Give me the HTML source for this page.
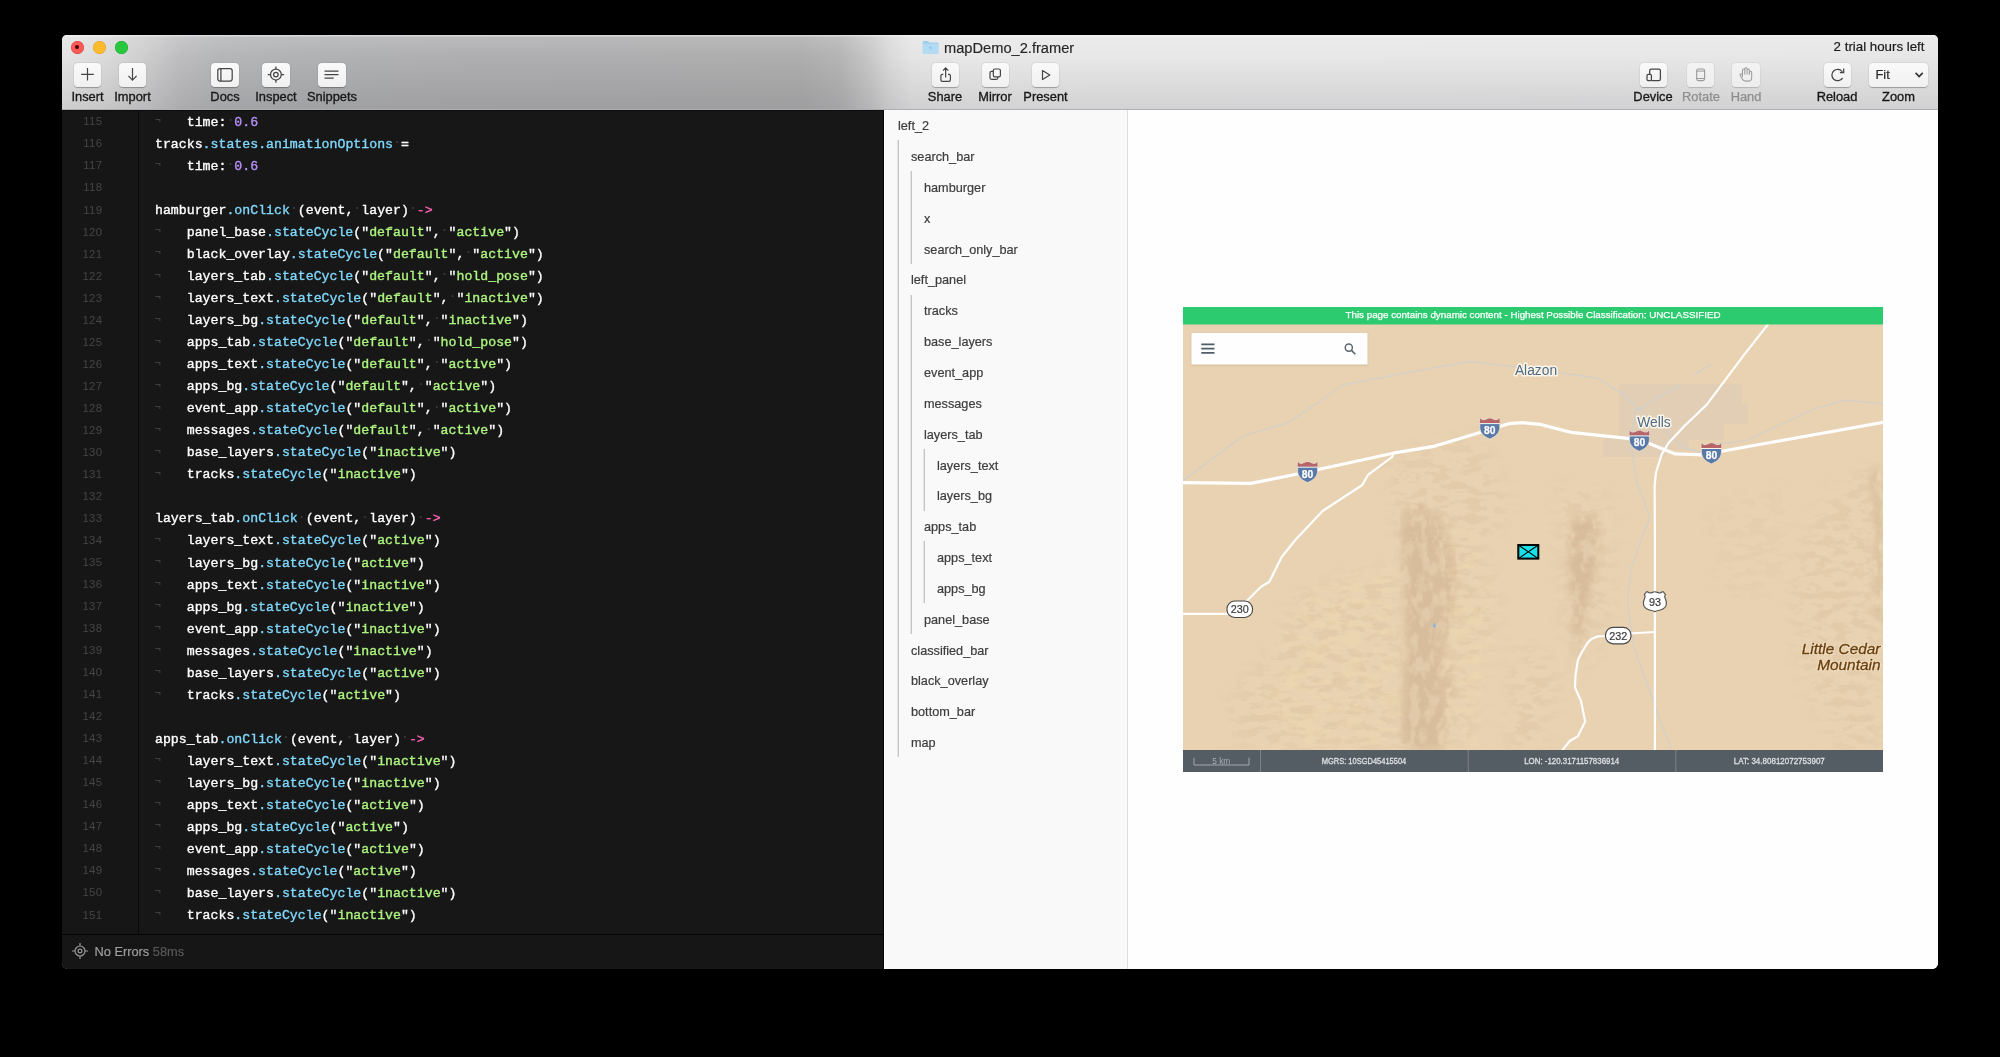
<!DOCTYPE html>
<html><head><meta charset="utf-8"><title>mapDemo_2.framer</title>
<style>
*{box-sizing:border-box;margin:0;padding:0}
html,body{width:2000px;height:1057px;background:#000;overflow:hidden}
body{font-family:"Liberation Sans",sans-serif;position:relative}
#win{position:absolute;left:62px;top:35px;width:1876px;height:934px;border-radius:5px 5px 6px 6px;overflow:hidden;background:#fff;will-change:transform;opacity:.999}
#tb{position:absolute;left:0;top:0;width:1876px;height:75px;
 background:
  linear-gradient(to bottom,rgba(255,255,255,.16) 0,rgba(255,255,255,0) 28%,rgba(0,0,8,.095) 100%),
  linear-gradient(to right,#e5e5e5 0px,#dddddd 40px,#d0d0d1 80px,#bebec0 120px,#b6b7b9 160px,#b2b3b5 240px,#b0b0b2 400px,#afafb0 740px,#b6b6b7 778px,#c9c9ca 808px,#dbdbdc 828px,#e6e6e7 850px,#e9e9ea 900px,#e8e8e9 1876px);
 border-bottom:1px solid #b0b0b2}
#tb:before{content:"";position:absolute;left:0;top:0;right:0;height:2px;background:linear-gradient(rgba(255,255,255,.5),rgba(255,255,255,.12))}
.tl{position:absolute;top:5.5px;width:13px;height:13px;border-radius:50%}
.btn{position:absolute;top:28px;height:24px;width:28px;border-radius:4px;background:linear-gradient(#fbfbfb,#f1f1f1);box-shadow:0 0.5px 1px rgba(0,0,0,.28),0 0 0 .5px rgba(0,0,0,.05)}
.btn svg{position:absolute;left:0;top:0;width:28px;height:24px}
.btn.dis{background:linear-gradient(#f4f4f4,#eeeeee);box-shadow:0 0.5px 1px rgba(0,0,0,.16),0 0 0 .5px rgba(0,0,0,.04)}
.lb{position:absolute;top:54px;width:80px;margin-left:-40px;text-align:center;font-size:12.85px;color:#1a1a1a;line-height:16px;white-space:nowrap;-webkit-text-stroke:.32px #161616}
.lb.dis{color:#8e8e8e;-webkit-text-stroke:.25px #8e8e8e}
#title{position:absolute;left:882px;top:3.6px;font-size:14.65px;line-height:18px;color:#262626;white-space:nowrap;-webkit-text-stroke:.15px #262626}
#trial{position:absolute;right:13.5px;top:2.8px;font-size:13.3px;line-height:17px;color:#1c1c1c;white-space:nowrap;-webkit-text-stroke:.2px #1c1c1c}
#ed{position:absolute;left:0;top:75px;width:822px;height:859px;background:#181818;border-right:1px solid #050505}
#ed:after{content:"";position:absolute;left:0;top:0;width:821px;height:1px;background:#0d0d0d}
#gut{position:absolute;left:0;top:0;width:77px;height:824px;border-right:1px solid #090909;background:#171717}
.ln{height:22.04px;line-height:22.04px;text-align:right;padding-right:36.5px;font-size:11.4px;letter-spacing:.35px;color:#464646;font-family:"Liberation Sans",sans-serif}
#lns{position:absolute;left:0;top:.4px;width:77px}
#code{position:absolute;left:93px;top:1.9px;font-family:"Liberation Mono",monospace;font-size:13.22px;color:#fff;white-space:pre;-webkit-text-stroke:.35px #fff}
.cl{height:22.04px;line-height:22.04px}
.p{color:#80d9fd;-webkit-text-stroke:.35px #80d9fd}
.s{color:#aef580;-webkit-text-stroke:.35px #aef580}
.n{color:#b892fb;-webkit-text-stroke:.35px #b892fb}
.a{color:#ff63b5;-webkit-text-stroke:.35px #ff63b5}
.d{color:#404040;-webkit-text-stroke:0;position:relative;top:-1.8px}
.nl{color:#4c4c4c;-webkit-text-stroke:.2px #4c4c4c;font-size:9.5px;position:relative;top:-2.6px;display:inline-block;width:7.93px;line-height:10px}
#st{position:absolute;left:0;top:824px;width:821px;height:35px;border-top:1px solid #060606;background:#171717}
#st .t{position:absolute;left:32.5px;top:9px;font-size:12.8px;-webkit-text-stroke:.15px #a2a2a2;line-height:16px;color:#a2a2a2;white-space:nowrap}
#st .t i{font-style:normal;color:#5a5a5a;-webkit-text-stroke:.15px #5a5a5a}
#lay{position:absolute;left:823px;top:75px;width:243px;height:859px;background:#fafafa;border-right:1px solid #dedede}
.ly{position:absolute;font-size:12.7px;line-height:20px;color:#3e3e3e;white-space:nowrap;margin-top:1.2px;-webkit-text-stroke:.2px #3e3e3e}
.gd{position:absolute;width:1px;background:#c6c6c6;box-shadow:-1px 0 0 rgba(198,198,198,.4)}
#pv{position:absolute;left:1066px;top:75px;width:810px;height:859px;background:#fff}
#map{position:absolute;left:1121px;top:272px;width:700px;height:465px;will-change:transform;opacity:.999}
</style></head><body>
<div id="win">
 <div id="tb">
  <div class="tl" style="left:8.5px;background:#fc5b57;box-shadow:inset 0 0 0 .5px #df4744"><div style="position:absolute;left:4.5px;top:4.5px;width:4px;height:4px;border-radius:50%;background:#4c0102"></div></div>
  <div class="tl" style="left:30.5px;background:#fdbc2e;box-shadow:inset 0 0 0 .5px #dea034"></div>
  <div class="tl" style="left:52.5px;background:#28c83f;box-shadow:inset 0 0 0 .5px #1eab2c"></div>

  <div class="btn" style="left:12px;width:27px"><svg viewBox="0 0 28 24"><path d="M13.500 5v12.600M7.200 11.300h12.600" stroke="#464646" stroke-width="1.2" fill="none"/></svg></div>
  <div class="lb" style="left:25.5px">Insert</div>
  <div class="btn" style="left:57px;width:27px"><svg viewBox="0 0 28 24"><path d="M13.500 5v12M9.400 12.800l4.100 4.400l4.100-4.400" stroke="#464646" stroke-width="1.2" fill="none"/></svg></div>
  <div class="lb" style="left:70.5px">Import</div>
  <div class="btn" style="left:149px"><svg viewBox="0 0 28 24"><rect x="6.800" y="5.600" width="14.400" height="12.400" rx="2.200" stroke="#464646" stroke-width="1.25" fill="none"/><path d="M9.900 5.600v12.400" stroke="#464646" stroke-width="1.25"/></svg></div>
  <div class="lb" style="left:163px">Docs</div>
  <div class="btn" style="left:200px"><svg viewBox="0 0 28 24"><circle cx="13.900" cy="11.600" r="5.400" stroke="#464646" stroke-width="1.25" fill="none"/><circle cx="13.900" cy="11.600" r="2.300" stroke="#464646" stroke-width="1.25" fill="none"/><path d="M13.900 3.400v2.800M13.900 17v2.800M5.700 11.600h2.800M19.300 11.600h2.800" stroke="#464646" stroke-width="1.25"/></svg></div>
  <div class="lb" style="left:214px">Inspect</div>
  <div class="btn" style="left:256px"><svg viewBox="0 0 28 24"><path d="M6.500 8.200h14M6.500 11.700h14M6.500 15.200h9.200" stroke="#464646" stroke-width="1.25"/></svg></div>
  <div class="lb" style="left:270px">Snippets</div>

  <svg style="position:absolute;left:860px;top:5px" width="18" height="15" viewBox="0 0 18 15"><path d="M.8 1.800a.8 .8 0 0 1 .8-.8h4.400l1.300 1.400h8.300a.8 .8 0 0 1 .8 .8v10.200a.6 .6 0 0 1-.6 .6H1.400a.6 .6 0 0 1-.6-.6z" fill="#9fd0f0"/><path d="M.8 3.800h15.600v9.600a.6 .6 0 0 1-.6 .6H1.400a.6 .6 0 0 1-.6-.6z" fill="#b4dcf5"/><path d="M7.300 6.500h2.800l-1.400 1.500h1.400l-1.900 2v-1.700h-.9z" fill="#8ec6ec"/></svg>
  <div id="title">mapDemo_2.framer</div>

  <div class="btn" style="left:870px;width:27px"><svg viewBox="0 0 28 24"><path d="M11.300 11.300H10.300a1.400 1.400 0 0 0-1.400 1.400V17a1.400 1.400 0 0 0 1.400 1.400H17a1.400 1.400 0 0 0 1.400-1.400V12.700a1.400 1.400 0 0 0-1.400-1.400H16M13.650 14.400V5M11 7.600L13.650 4.900L16.300 7.600" stroke="#464646" stroke-width="1.2" fill="none"/></svg></div>
  <div class="lb" style="left:883px">Share</div>
  <div class="btn" style="left:920px;width:27px"><svg viewBox="0 0 28 24"><rect x="11.300" y="6" width="7.100" height="7.800" rx="1.600" stroke="#464646" stroke-width="1.2" fill="none"/><path d="M11.300 8.400H9.600a1.600 1.600 0 0 0-1.600 1.600V14.700a1.600 1.600 0 0 0 1.600 1.600H14.300a1.600 1.600 0 0 0 1.600-1.600V13.800" stroke="#464646" stroke-width="1.2" fill="none"/></svg></div>
  <div class="lb" style="left:933px">Mirror</div>
  <div class="btn" style="left:970px;width:27px"><svg viewBox="0 0 28 24"><path d="M10.500 7.500L17.800 12L10.500 16.500z" stroke="#464646" stroke-width="1.2" fill="none" stroke-linejoin="round"/></svg></div>
  <div class="lb" style="left:983.5px">Present</div>

  <div id="trial">2 trial hours left</div>
  <div class="btn" style="left:1578px;width:27px"><svg viewBox="0 0 28 24"><path d="M11.400 17.600H18.800a1.600 1.600 0 0 0 1.600-1.600V7.600a1.600 1.600 0 0 0-1.600-1.600H11.300a1.600 1.600 0 0 0-1.600 1.600V11.300" stroke="#464646" stroke-width="1.25" fill="none"/><rect x="7" y="11.300" width="4.400" height="6.300" rx="1.200" stroke="#464646" stroke-width="1.25" fill="none"/></svg></div>
  <div class="lb" style="left:1591px">Device</div>
  <div class="btn dis" style="left:1625px;width:27px"><svg viewBox="0 0 28 24"><rect x="9.700" y="6" width="7.900" height="11.600" rx="1.800" stroke="#9c9c9c" stroke-width="1.15" fill="none"/><path d="M9.700 8.100h7.900M9.700 15.500h7.900" stroke="#9c9c9c" stroke-width="1"/></svg></div>
  <div class="lb dis" style="left:1639px">Rotate</div>
  <div class="btn dis" style="left:1670px"><svg viewBox="0 0 28 24"><path d="M10.500 13.600V7.200a1.150 1.150 0 0 1 2.300 0V5.800a1.150 1.150 0 0 1 2.300 0V7.200a1.150 1.150 0 0 1 2.300 0V9.400a1.150 1.150 0 0 1 2.300 0V14.400c0 2.200-1.600 3.700-3.800 3.700h-2c-2 0-3.100-1-3.800-2.400l-1.900-3.300a1.100 1.100 0 0 1 1.900-1.100zM12.800 7.200V11.500M15.100 7.200V11.500M17.400 9.400V11.700" stroke="#9c9c9c" stroke-width="1.05" fill="none" stroke-linejoin="round"/></svg></div>
  <div class="lb dis" style="left:1684px">Hand</div>
  <div class="btn" style="left:1762px;width:27px"><svg viewBox="0 0 28 24"><path d="M18.540 14.850A5.700 5.700 0 1 1 18.430 8.980" stroke="#464646" stroke-width="1.25" fill="none"/><path d="M19.700 5.400V9.500H15.900" stroke="#464646" stroke-width="1.25" fill="none"/></svg></div>
  <div class="lb" style="left:1775px">Reload</div>
  <div class="btn" style="left:1807px;width:59px"><div style="position:absolute;left:6.500px;top:4px;font-size:12.85px;line-height:16px;color:#2a2a2a;-webkit-text-stroke:.2px #2a2a2a">Fit</div><svg viewBox="0 0 59 24" style="width:59px"><path d="M46.600 9.900l3.550 3.600l3.550-3.600" stroke="#333" stroke-width="1.6" fill="none"/></svg></div>
  <div class="lb" style="left:1836.5px">Zoom</div>
 </div>

 <div id="ed">
  <div id="gut"></div>
  <div id="lns">
<div class="ln">115</div>
<div class="ln">116</div>
<div class="ln">117</div>
<div class="ln">118</div>
<div class="ln">119</div>
<div class="ln">120</div>
<div class="ln">121</div>
<div class="ln">122</div>
<div class="ln">123</div>
<div class="ln">124</div>
<div class="ln">125</div>
<div class="ln">126</div>
<div class="ln">127</div>
<div class="ln">128</div>
<div class="ln">129</div>
<div class="ln">130</div>
<div class="ln">131</div>
<div class="ln">132</div>
<div class="ln">133</div>
<div class="ln">134</div>
<div class="ln">135</div>
<div class="ln">136</div>
<div class="ln">137</div>
<div class="ln">138</div>
<div class="ln">139</div>
<div class="ln">140</div>
<div class="ln">141</div>
<div class="ln">142</div>
<div class="ln">143</div>
<div class="ln">144</div>
<div class="ln">145</div>
<div class="ln">146</div>
<div class="ln">147</div>
<div class="ln">148</div>
<div class="ln">149</div>
<div class="ln">150</div>
<div class="ln">151</div>
  </div>
  <div id="code"><div class="cl"><span class="nl">¬</span>   time:<span class="d">·</span><span class="n">0.6</span></div><div class="cl">tracks<span class="p">.states</span><span class="p">.animationOptions</span><span class="d">·</span>=</div><div class="cl"><span class="nl">¬</span>   time:<span class="d">·</span><span class="n">0.6</span></div><div class="cl"></div><div class="cl">hamburger<span class="p">.onClick</span><span class="d">·</span>(event,<span class="d">·</span>layer)<span class="d">·</span><span class="a">-&gt;</span></div><div class="cl"><span class="nl">¬</span>   panel_base<span class="p">.stateCycle</span>("<span class="s">default</span>",<span class="d">·</span>"<span class="s">active</span>")</div><div class="cl"><span class="nl">¬</span>   black_overlay<span class="p">.stateCycle</span>("<span class="s">default</span>",<span class="d">·</span>"<span class="s">active</span>")</div><div class="cl"><span class="nl">¬</span>   layers_tab<span class="p">.stateCycle</span>("<span class="s">default</span>",<span class="d">·</span>"<span class="s">hold_pose</span>")</div><div class="cl"><span class="nl">¬</span>   layers_text<span class="p">.stateCycle</span>("<span class="s">default</span>",<span class="d">·</span>"<span class="s">inactive</span>")</div><div class="cl"><span class="nl">¬</span>   layers_bg<span class="p">.stateCycle</span>("<span class="s">default</span>",<span class="d">·</span>"<span class="s">inactive</span>")</div><div class="cl"><span class="nl">¬</span>   apps_tab<span class="p">.stateCycle</span>("<span class="s">default</span>",<span class="d">·</span>"<span class="s">hold_pose</span>")</div><div class="cl"><span class="nl">¬</span>   apps_text<span class="p">.stateCycle</span>("<span class="s">default</span>",<span class="d">·</span>"<span class="s">active</span>")</div><div class="cl"><span class="nl">¬</span>   apps_bg<span class="p">.stateCycle</span>("<span class="s">default</span>",<span class="d">·</span>"<span class="s">active</span>")</div><div class="cl"><span class="nl">¬</span>   event_app<span class="p">.stateCycle</span>("<span class="s">default</span>",<span class="d">·</span>"<span class="s">active</span>")</div><div class="cl"><span class="nl">¬</span>   messages<span class="p">.stateCycle</span>("<span class="s">default</span>",<span class="d">·</span>"<span class="s">active</span>")</div><div class="cl"><span class="nl">¬</span>   base_layers<span class="p">.stateCycle</span>("<span class="s">inactive</span>")</div><div class="cl"><span class="nl">¬</span>   tracks<span class="p">.stateCycle</span>("<span class="s">inactive</span>")</div><div class="cl"></div><div class="cl">layers_tab<span class="p">.onClick</span><span class="d">·</span>(event,<span class="d">·</span>layer)<span class="d">·</span><span class="a">-&gt;</span></div><div class="cl"><span class="nl">¬</span>   layers_text<span class="p">.stateCycle</span>("<span class="s">active</span>")</div><div class="cl"><span class="nl">¬</span>   layers_bg<span class="p">.stateCycle</span>("<span class="s">active</span>")</div><div class="cl"><span class="nl">¬</span>   apps_text<span class="p">.stateCycle</span>("<span class="s">inactive</span>")</div><div class="cl"><span class="nl">¬</span>   apps_bg<span class="p">.stateCycle</span>("<span class="s">inactive</span>")</div><div class="cl"><span class="nl">¬</span>   event_app<span class="p">.stateCycle</span>("<span class="s">inactive</span>")</div><div class="cl"><span class="nl">¬</span>   messages<span class="p">.stateCycle</span>("<span class="s">inactive</span>")</div><div class="cl"><span class="nl">¬</span>   base_layers<span class="p">.stateCycle</span>("<span class="s">active</span>")</div><div class="cl"><span class="nl">¬</span>   tracks<span class="p">.stateCycle</span>("<span class="s">active</span>")</div><div class="cl"></div><div class="cl">apps_tab<span class="p">.onClick</span><span class="d">·</span>(event,<span class="d">·</span>layer)<span class="d">·</span><span class="a">-&gt;</span></div><div class="cl"><span class="nl">¬</span>   layers_text<span class="p">.stateCycle</span>("<span class="s">inactive</span>")</div><div class="cl"><span class="nl">¬</span>   layers_bg<span class="p">.stateCycle</span>("<span class="s">inactive</span>")</div><div class="cl"><span class="nl">¬</span>   apps_text<span class="p">.stateCycle</span>("<span class="s">active</span>")</div><div class="cl"><span class="nl">¬</span>   apps_bg<span class="p">.stateCycle</span>("<span class="s">active</span>")</div><div class="cl"><span class="nl">¬</span>   event_app<span class="p">.stateCycle</span>("<span class="s">active</span>")</div><div class="cl"><span class="nl">¬</span>   messages<span class="p">.stateCycle</span>("<span class="s">active</span>")</div><div class="cl"><span class="nl">¬</span>   base_layers<span class="p">.stateCycle</span>("<span class="s">inactive</span>")</div><div class="cl"><span class="nl">¬</span>   tracks<span class="p">.stateCycle</span>("<span class="s">inactive</span>")</div></div>
  <div id="st">
   <svg style="position:absolute;left:8.7px;top:7px" width="18" height="18" viewBox="0 0 18 18"><circle cx="9" cy="9" r="5" stroke="#9a9a9a" stroke-width="1.2" fill="none"/><circle cx="9" cy="9" r="1.900" stroke="#9a9a9a" stroke-width="1.2" fill="none"/><path d="M9 1v3M9 14v3M1 9h3M14 9h3" stroke="#9a9a9a" stroke-width="1.2"/></svg>
   <div class="t">No Errors <i>58ms</i></div>
  </div>
 </div>

 <div id="lay">
<div class="ly" style="left:13px;top:5.00px">left_2</div>
<div class="ly" style="left:26px;top:35.85px">search_bar</div>
<div class="ly" style="left:39px;top:66.70px">hamburger</div>
<div class="ly" style="left:39px;top:97.55px">x</div>
<div class="ly" style="left:39px;top:128.40px">search_only_bar</div>
<div class="ly" style="left:26px;top:159.25px">left_panel</div>
<div class="ly" style="left:39px;top:190.10px">tracks</div>
<div class="ly" style="left:39px;top:220.95px">base_layers</div>
<div class="ly" style="left:39px;top:251.80px">event_app</div>
<div class="ly" style="left:39px;top:282.65px">messages</div>
<div class="ly" style="left:39px;top:313.50px">layers_tab</div>
<div class="ly" style="left:52px;top:344.35px">layers_text</div>
<div class="ly" style="left:52px;top:375.20px">layers_bg</div>
<div class="ly" style="left:39px;top:406.05px">apps_tab</div>
<div class="ly" style="left:52px;top:436.90px">apps_text</div>
<div class="ly" style="left:52px;top:467.75px">apps_bg</div>
<div class="ly" style="left:39px;top:498.60px">panel_base</div>
<div class="ly" style="left:26px;top:529.45px">classified_bar</div>
<div class="ly" style="left:26px;top:560.30px">black_overlay</div>
<div class="ly" style="left:26px;top:591.15px">bottom_bar</div>
<div class="ly" style="left:26px;top:622.00px">map</div>
<div class="gd" style="left:13px;top:30.42px;height:617.00px"></div>
<div class="gd" style="left:26px;top:61.27px;height:92.55px"></div>
<div class="gd" style="left:26px;top:184.68px;height:339.35px"></div>
<div class="gd" style="left:39px;top:338.93px;height:61.70px"></div>
<div class="gd" style="left:39px;top:431.48px;height:61.70px"></div>
 </div>

 <div id="pv"></div>
 <div id="map">
<svg width="700" height="465" viewBox="0 0 700 465" style="display:block;font-family:'Liberation Sans',sans-serif">
<defs>
 <filter id="b4" x="-20%" y="-20%" width="140%" height="140%"><feGaussianBlur stdDeviation="4"/></filter>
 <filter id="b8" x="-20%" y="-20%" width="140%" height="140%"><feGaussianBlur stdDeviation="9"/></filter>
 <filter id="b1" x="-5%" y="-20%" width="110%" height="140%"><feGaussianBlur stdDeviation=".8"/></filter>
 <filter id="b2" x="-20%" y="-20%" width="140%" height="140%"><feGaussianBlur stdDeviation="2"/></filter>
 
 <filter id="tD" x="0" y="0" width="700" height="465" filterUnits="userSpaceOnUse" color-interpolation-filters="sRGB">
  <feGaussianBlur in="SourceAlpha" stdDeviation="3.5" result="m"/>
  <feTurbulence type="fractalNoise" baseFrequency="0.11 0.06" numOctaves="3" seed="11" result="n"/>
  <feColorMatrix in="n" type="matrix" values="0 0 0 0 .80  0 0 0 0 .68  0 0 0 0 .55  5 0 0 0 -1.7" result="p"/>
  <feComposite in="p" in2="m" operator="in"/>
 </filter>
 <filter id="tM" x="0" y="0" width="700" height="465" filterUnits="userSpaceOnUse" color-interpolation-filters="sRGB">
  <feGaussianBlur in="SourceAlpha" stdDeviation="10" result="m"/>
  <feTurbulence type="fractalNoise" baseFrequency="0.06 0.13" numOctaves="3" seed="4" result="n"/>
  <feColorMatrix in="n" type="matrix" values="0 0 0 0 .82  0 0 0 0 .70  0 0 0 0 .57  0 9 0 0 -4.3" result="p"/>
  <feComposite in="p" in2="m" operator="in"/>
 </filter>
 <filter id="tL" x="0" y="0" width="700" height="465" filterUnits="userSpaceOnUse" color-interpolation-filters="sRGB">
  <feGaussianBlur in="SourceAlpha" stdDeviation="8" result="m"/>
  <feTurbulence type="fractalNoise" baseFrequency="0.05 0.14" numOctaves="3" seed="23" result="n"/>
  <feColorMatrix in="n" type="matrix" values="0 0 0 0 .96  0 0 0 0 .87  0 0 0 0 .70  0 0 9 0 -4.4" result="p"/>
  <feComposite in="p" in2="m" operator="in"/>
 </filter>
 <clipPath id="mc"><rect x="0" y="17" width="700" height="426"/></clipPath>
</defs>
<rect width="700" height="465" fill="#e9d3b2"/>
<g clip-path="url(#mc)">
 <!-- terrain -->
 <g filter="url(#b4)" opacity=".2">
  <path d="M219 225 L240 210 L258 235 L268 270 L262 320 L256 360 L262 400 L254 443 L219 443 L222 320z" fill="#c9ad8d"/>
  <path d="M388 225 L410 212 L412 255 L402 300 L394 340 L389 300z" fill="#c9ad8d"/>
 </g>
 <g filter="url(#tD)" opacity=".4">
  <path d="M217 205 L236 192 L262 215 L278 262 L272 300 L264 340 L272 380 L262 443 L217 443 L221 300z"/>
  <path d="M386 215 L414 203 L417 250 L405 300 L394 352 L388 300 L384 250z"/>
  <path d="M686 165 L700 160 L700 330 L690 300 L692 230z"/>
 </g>
 <g filter="url(#tM)" opacity=".2">
  <path d="M110 285 L217 255 L217 443 L60 443 L40 400 L95 330z"/>
  <path d="M200 150 L300 130 L330 200 L300 250 L217 250z"/>
  <path d="M262 215 L300 240 L320 300 L300 360 L290 443 L262 443z"/>
  <path d="M372 175 L430 190 L430 300 L405 370 L380 330z"/>
  <path d="M645 185 L700 150 L700 443 L655 443 L622 380 L606 300 L615 240z"/><path d="M520 200 L600 175 L610 240 L590 290 L540 300z" opacity=".5"/>
  <path d="M330 330 L380 360 L360 443 L320 443z"/>
 </g>
 <g filter="url(#tL)" opacity=".3">
  <path d="M110 285 L217 255 L217 443 L80 443z"/>
  <path d="M262 215 L300 240 L310 320 L290 443 L262 443z"/>
 </g>
 <!-- urban area -->
 <path d="M436 77 H559 V96 H565 V117 H541 V133 H506 V143 H483 V150 H420 V130 H436z" fill="#e2cfb6"/>
 <!-- faint lines -->
 <g fill="none" stroke="#d1d1ce" stroke-width="1.1">
  <path d="M0 173.500 L60 129 L105.500 115.600 L161 77.400 L287 54.300 L332.500 60 L376.500 65.600 L415 71.300 L437.800 86 L453.700 99.700 L483 124.700 L501 140.600 L520 146"/>
  <path d="M453.700 99.700 L452.600 106.500 L447 133.700 L453.700 174.600 L467 211 L458 233 L447.600 263 L445.100 288.500 L445.100 301.300 L447.600 318.300 L451 339.600 L455.300 353 L487.800 442"/>
  <path d="M497 77.500 L453.700 104"/>
  <path d="M528.600 57 L511.600 67.500"/>
  <path d="M520 146 L531 137 L562.700 133.700 L630.800 102 L662.600 93 L700 97"/>
 </g>
 <!-- roads -->
 <g fill="none" stroke="#fff" stroke-linejoin="round" stroke-linecap="round">
  <path stroke-width="3.200" d="M-2 175.700 L68 176.400 L115.700 166.700 L210 146.200 L250.800 139.400 L296.200 125.800 L325.700 116.700 L339.300 115.600 L357 117.400 L387.900 125.300 L444.600 131.300 L465 136 L492.300 146.900 L519.500 147.800 L540 144 L702 115.100"/>
  <path stroke-width="2.200" d="M210 146.200 L209.500 149.600 L185 167.800 L179.300 178 L139.600 204 L112.300 233 L98.700 250 L86.200 275 L78.300 279.500 L64.600 293 L50 305 L44 306.800 L-2 306.800"/>
  <path stroke-width="2.200" d="M585.400 16.800 L560.400 48.600 L524 97.400 L501.400 119 L485.500 136 L478.700 147.400 L473 165.500 L471.600 179 L471.900 233 L471.900 444"/>
  <path stroke-width="2.200" d="M471.400 325 L447 326.500 L423 329 L414.400 329.400 L408.500 331.900 L405 335.300 L399.500 344 L394.900 353 L392.400 369.200 L392 380.600 L398 394 L402.200 414.600 L394.700 429.400 L386.700 434 L378.800 444"/>
 </g>
 <!-- water -->
 <path d="M251.300 315.500 l1.800 3.200 l-.8 1.800 l-2 0 l-.6 -2z" fill="#8db7dc"/>
 <!-- labels -->
 <g font-size="13.800" fill="#506c84" stroke="#fdf6ea" stroke-width="3" stroke-linejoin="round" paint-order="stroke" text-anchor="middle">
  <text x="353" y="68">Alazon</text>
  <text x="471" y="120">Wells</text>
 </g>
 <g font-size="15.400" font-style="italic" text-anchor="end" fill="#6a3f0d">
  <g stroke="#f4e3c8" stroke-width="2.200" stroke-linejoin="round" opacity=".9"><text x="697.500" y="346.500">Little Cedar</text><text x="697.500" y="362.500">Mountain</text></g>
  <g stroke="#6a3f0d" stroke-width=".3"><text x="697.500" y="346.500">Little Cedar</text><text x="697.500" y="362.500">Mountain</text></g>
 </g>
 <!-- shields -->
 <g transform="translate(124.600 165.300)">
  <path d="M-9.600 -10.600C-8.600 -8.400 -6.400 -8 -4.600 -8.800C-3 -9.600 -1.500 -10.300 0 -10.300C1.500 -10.300 3 -9.600 4.600 -8.800C6.400 -8 8.600 -8.400 9.600 -10.600L10 -5.200L10 -1.500C10 4 6.200 7.800 0 10.300C-6.200 7.800 -10 4 -10 -1.500L-10 -5.200Z" fill="#5a7aaa" stroke="#efe4d3" stroke-width=".8"/>
  <path d="M-9.600 -10.600C-8.600 -8.400 -6.400 -8 -4.600 -8.800C-3 -9.600 -1.500 -10.300 0 -10.300C1.500 -10.300 3 -9.600 4.600 -8.800C6.400 -8 8.600 -8.400 9.600 -10.600L10 -5.600L-10 -5.600Z" fill="#b9666a"/>
  <path d="M-10.200 -5.100h20.400" stroke="#fbf6f0" stroke-width="1"/>
  <text x="0" y="5.200" font-size="10.300" font-weight="bold" fill="#fff" stroke="#fff" stroke-width=".25" text-anchor="middle">80</text>
 </g>
 <g transform="translate(306.800 121.700)">
  <path d="M-9.600 -10.600C-8.600 -8.400 -6.400 -8 -4.600 -8.800C-3 -9.600 -1.500 -10.300 0 -10.300C1.500 -10.300 3 -9.600 4.600 -8.800C6.400 -8 8.600 -8.400 9.600 -10.600L10 -5.200L10 -1.500C10 4 6.200 7.800 0 10.300C-6.200 7.800 -10 4 -10 -1.500L-10 -5.200Z" fill="#5a7aaa" stroke="#efe4d3" stroke-width=".8"/>
  <path d="M-9.600 -10.600C-8.600 -8.400 -6.400 -8 -4.600 -8.800C-3 -9.600 -1.500 -10.300 0 -10.300C1.500 -10.300 3 -9.600 4.600 -8.800C6.400 -8 8.600 -8.400 9.600 -10.600L10 -5.600L-10 -5.600Z" fill="#b9666a"/>
  <path d="M-10.200 -5.100h20.400" stroke="#fbf6f0" stroke-width="1"/>
  <text x="0" y="5.200" font-size="10.300" font-weight="bold" fill="#fff" stroke="#fff" stroke-width=".25" text-anchor="middle">80</text>
 </g>
 <g transform="translate(456.400 134)">
  <path d="M-9.600 -10.600C-8.600 -8.400 -6.400 -8 -4.600 -8.800C-3 -9.600 -1.500 -10.300 0 -10.300C1.500 -10.300 3 -9.600 4.600 -8.800C6.400 -8 8.600 -8.400 9.600 -10.600L10 -5.200L10 -1.500C10 4 6.200 7.800 0 10.300C-6.200 7.800 -10 4 -10 -1.500L-10 -5.200Z" fill="#5a7aaa" stroke="#efe4d3" stroke-width=".8"/>
  <path d="M-9.600 -10.600C-8.600 -8.400 -6.400 -8 -4.600 -8.800C-3 -9.600 -1.500 -10.300 0 -10.300C1.500 -10.300 3 -9.600 4.600 -8.800C6.400 -8 8.600 -8.400 9.600 -10.600L10 -5.600L-10 -5.600Z" fill="#b9666a"/>
  <path d="M-10.200 -5.100h20.400" stroke="#fbf6f0" stroke-width="1"/>
  <text x="0" y="5.200" font-size="10.300" font-weight="bold" fill="#fff" stroke="#fff" stroke-width=".25" text-anchor="middle">80</text>
 </g>
 <g transform="translate(528.400 146.600)">
  <path d="M-9.600 -10.600C-8.600 -8.400 -6.400 -8 -4.600 -8.800C-3 -9.600 -1.500 -10.300 0 -10.300C1.500 -10.300 3 -9.600 4.600 -8.800C6.400 -8 8.600 -8.400 9.600 -10.600L10 -5.200L10 -1.500C10 4 6.200 7.800 0 10.300C-6.200 7.800 -10 4 -10 -1.500L-10 -5.200Z" fill="#5a7aaa" stroke="#efe4d3" stroke-width=".8"/>
  <path d="M-9.600 -10.600C-8.600 -8.400 -6.400 -8 -4.600 -8.800C-3 -9.600 -1.500 -10.300 0 -10.300C1.500 -10.300 3 -9.600 4.600 -8.800C6.400 -8 8.600 -8.400 9.600 -10.600L10 -5.600L-10 -5.600Z" fill="#b9666a"/>
  <path d="M-10.200 -5.100h20.400" stroke="#fbf6f0" stroke-width="1"/>
  <text x="0" y="5.200" font-size="10.300" font-weight="bold" fill="#fff" stroke="#fff" stroke-width=".25" text-anchor="middle">80</text>
 </g>
 <g font-size="10.800" fill="#3c3c3c" stroke="#3c3c3c" stroke-width=".2" text-anchor="middle">
  <rect x="44" y="294" width="25.500" height="16.500" rx="7.800" fill="#fff" stroke="#4a4a4a" stroke-width="1.15"/>
  <text x="56.700" y="306.200">230</text>
  <rect x="422.500" y="320.300" width="25.500" height="16.500" rx="7.800" fill="#fff" stroke="#4a4a4a" stroke-width="1.15"/>
  <text x="435.200" y="332.500">232</text>
  <path transform="translate(471.900 294.500)" d="M0 -9.800C-1.800 -9.800 -3 -8.500 -4.700 -8.500C-6 -8.500 -7 -9.300 -8.100 -10L-10.600 -6.800C-9.900 -6 -9.600 -5 -9.900 -4.200C-10.800 -2 -11.500 -.300 -11.500 1.700C-11.500 4 -10.800 5.200 -9.800 6.200C-8.500 7.600 -7 8.200 -5.500 8.500C-3.500 8.900 -1.500 9 0 10.200C1.500 9 3.500 8.900 5.500 8.500C7 8.200 8.500 7.600 9.800 6.200C10.800 5.200 11.500 4 11.500 1.700C11.500 -.300 10.800 -2 9.900 -4.200C9.600 -5 9.900 -6 10.600 -6.800L8.100 -10C7 -9.300 6 -8.500 4.700 -8.500C3 -8.500 1.800 -9.800 0 -9.800Z" fill="#fff" stroke="#555" stroke-width="1.15" stroke-linejoin="round"/>
  <text x="471.900" y="298.600">93</text>
 </g>
 <!-- marker -->
 <rect x="335.300" y="238" width="20" height="13.600" fill="#19e2ea" stroke="#000" stroke-width="2"/>
 <path d="M335.300 238 L355.300 251.600 M355.300 238 L335.300 251.600" stroke="#000" stroke-width="1.100"/>
</g>
<!-- classification bar -->
<rect x="0" y="0" width="700" height="17.500" fill="#2ecc71"/>
<text x="350" y="10.900" font-size="9.300" fill="#fff" text-anchor="middle" stroke="#fff" stroke-width=".25" textLength="375" lengthAdjust="spacingAndGlyphs">This page contains dynamic content - Highest Possible Classification: UNCLASSIFIED</text>
<!-- search -->
<rect x="8.500" y="26.500" width="176" height="32" fill="#b9a88e" opacity=".5" filter="url(#b1)"/><rect x="8.500" y="26" width="176" height="31.500" fill="#fff"/>
<path d="M18.300 37.300h13.200M18.300 41.600h13.200M18.300 45.900h13.200" stroke="#4f5e6b" stroke-width="1.800"/>
<circle cx="165.800" cy="40.600" r="3.600" fill="none" stroke="#5a6670" stroke-width="1.400"/>
<path d="M168.500 43.400l3.800 3.800" stroke="#5a6670" stroke-width="1.600"/>
<!-- bottom bar -->
<rect x="0" y="443" width="700" height="22" fill="#555d65"/>
<path d="M77.500 443v22M285.300 443v22M492.800 443v22" stroke="#7c838a" stroke-width="1"/>
<path d="M11 450.700v7.300h55v-7.300" fill="none" stroke="#a4aab0" stroke-width="1"/>
<g font-size="8.200" fill="#dfe2e5" stroke="#dfe2e5" stroke-width=".28" text-anchor="middle">
 <text x="38.300" y="456.700" font-size="8.300" fill="#a9afb5" stroke="none">5 km</text>
 <text x="181" y="457.400" textLength="84.600" lengthAdjust="spacingAndGlyphs">MGRS: 10SGD45415504</text>
 <text x="388.700" y="457.400" textLength="95" lengthAdjust="spacingAndGlyphs">LON: -120.3171157836914</text>
 <text x="596.300" y="457.400" textLength="91" lengthAdjust="spacingAndGlyphs">LAT: 34.80812072753907</text>
</g>
</svg>

 </div>
</div>
</body></html>
